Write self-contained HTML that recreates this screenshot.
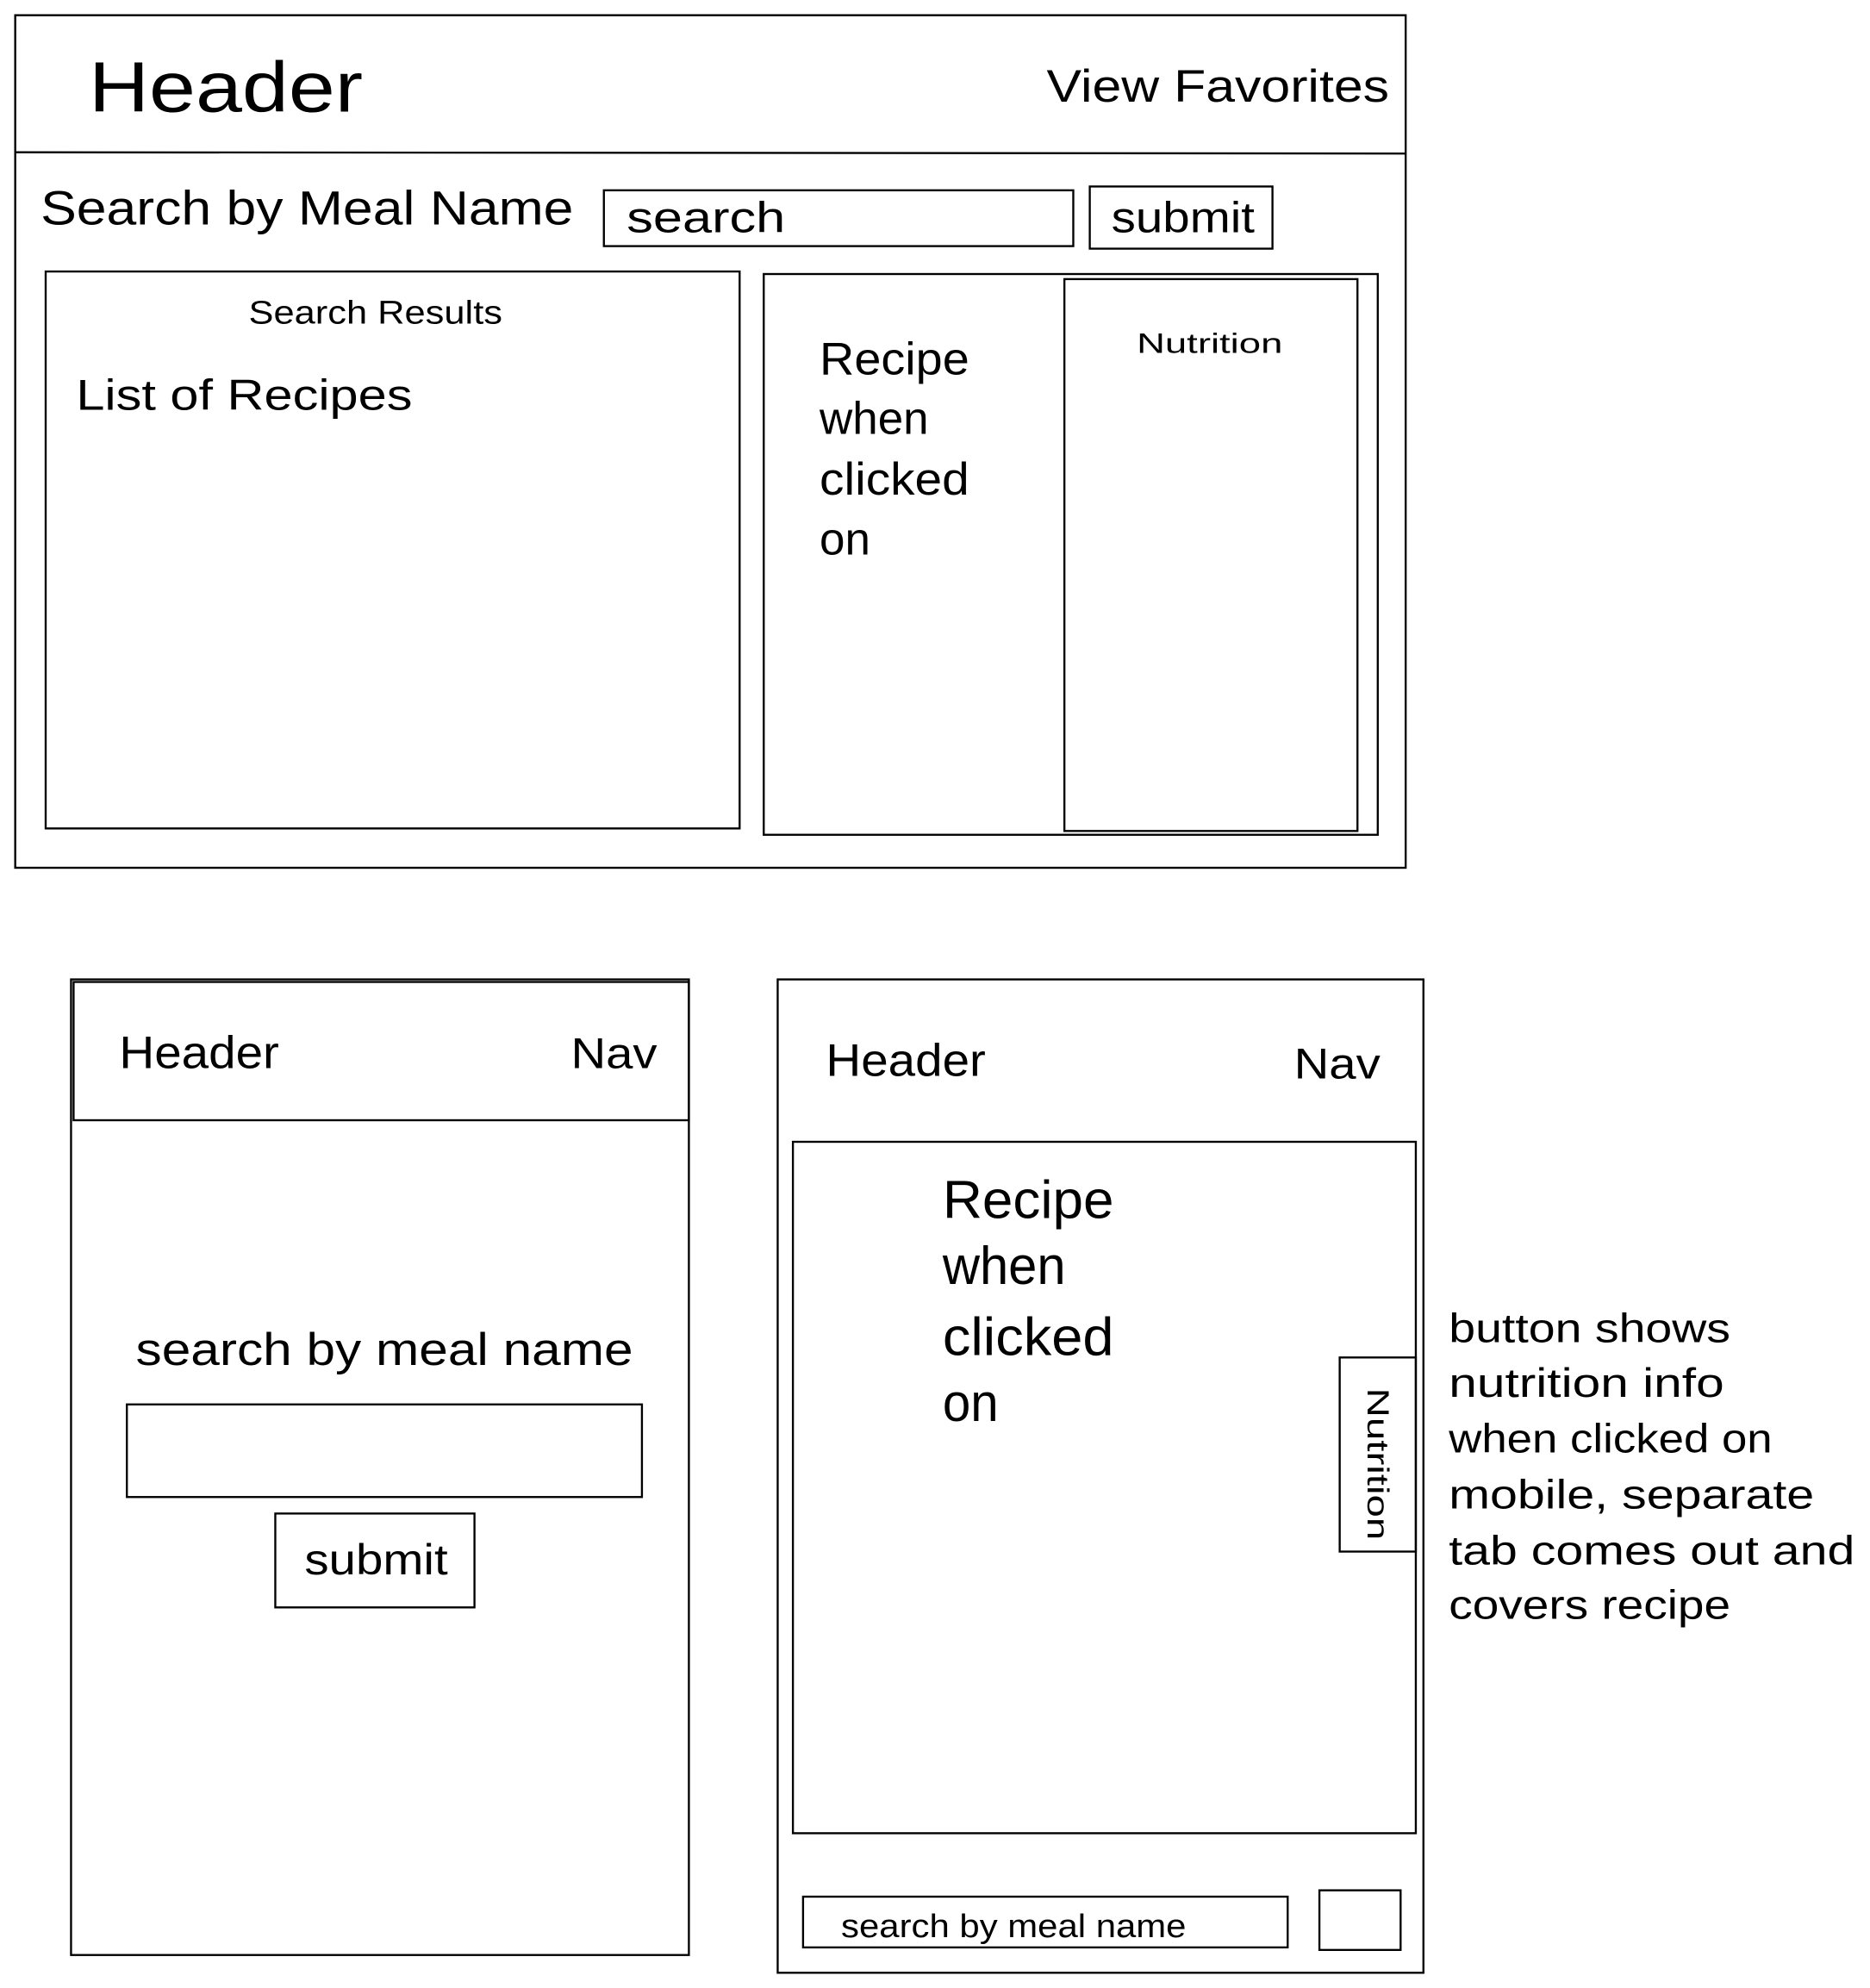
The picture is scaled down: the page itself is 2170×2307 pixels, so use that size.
<!DOCTYPE html>
<html><head><meta charset="utf-8"><style>
html,body{margin:0;padding:0;background:#fff;}
svg{display:block;}
text{font-family:"Liberation Sans",sans-serif;fill:#000;}
</style></head><body>
<svg width="2170" height="2307" viewBox="0 0 1474 1567" preserveAspectRatio="none" xmlns="http://www.w3.org/2000/svg">
<rect width="1474" height="1567" fill="#fff"/>
<g fill="none" stroke="#000" stroke-width="1.6">
<rect x="12" y="12" width="1096" height="672"/>
<line x1="12" y1="120" x2="1108" y2="121"/>
<rect x="476" y="150" width="370" height="44"/>
<rect x="859" y="147" width="144" height="49"/>
<rect x="36" y="214" width="547" height="439"/>
<rect x="602" y="216" width="484" height="442"/>
<rect x="839" y="220" width="231" height="435"/>
<rect x="56" y="772" width="487" height="769"/>
<rect x="58" y="774" width="485" height="109"/>
<rect x="100" y="1107" width="406" height="73"/>
<rect x="217" y="1193" width="157" height="74"/>
<rect x="613" y="772" width="509" height="783"/>
<rect x="625" y="900" width="491" height="545"/>
<rect x="1056" y="1070" width="60" height="153"/>
<rect x="633" y="1495" width="382" height="40"/>
<rect x="1040" y="1490" width="64" height="47"/>
</g>
<text x="70" y="88" font-size="56" textLength="216" lengthAdjust="spacingAndGlyphs">Header</text>
<text x="825" y="80" font-size="36" textLength="270" lengthAdjust="spacingAndGlyphs">View Favorites</text>
<text x="32" y="177" font-size="38" textLength="420" lengthAdjust="spacingAndGlyphs">Search by Meal Name</text>
<text x="494" y="183" font-size="34" textLength="125" lengthAdjust="spacingAndGlyphs">search</text>
<text x="876" y="183" font-size="34" textLength="113" lengthAdjust="spacingAndGlyphs">submit</text>
<text x="196" y="255" font-size="26" textLength="200" lengthAdjust="spacingAndGlyphs">Search Results</text>
<text x="60" y="323" font-size="34" textLength="265" lengthAdjust="spacingAndGlyphs">List of Recipes</text>
<text x="896" y="278" font-size="22" textLength="115" lengthAdjust="spacingAndGlyphs">Nutrition</text>
<text x="646" y="295" font-size="36" textLength="118" lengthAdjust="spacingAndGlyphs">Recipe</text>
<text x="646" y="342" font-size="36" textLength="86" lengthAdjust="spacingAndGlyphs">when</text>
<text x="646" y="390" font-size="36" textLength="118" lengthAdjust="spacingAndGlyphs">clicked</text>
<text x="646" y="437" font-size="36" textLength="40" lengthAdjust="spacingAndGlyphs">on</text>
<text x="94" y="842" font-size="36" textLength="126" lengthAdjust="spacingAndGlyphs">Header</text>
<text x="450" y="842" font-size="34" textLength="68" lengthAdjust="spacingAndGlyphs">Nav</text>
<text x="107" y="1076" font-size="36" textLength="392" lengthAdjust="spacingAndGlyphs">search by meal name</text>
<text x="240" y="1241" font-size="34" textLength="113" lengthAdjust="spacingAndGlyphs">submit</text>
<text x="651" y="848" font-size="36" textLength="126" lengthAdjust="spacingAndGlyphs">Header</text>
<text x="1020" y="850" font-size="34" textLength="68" lengthAdjust="spacingAndGlyphs">Nav</text>
<text x="743" y="960" font-size="42" textLength="135" lengthAdjust="spacingAndGlyphs">Recipe</text>
<text x="743" y="1012" font-size="42" textLength="97" lengthAdjust="spacingAndGlyphs">when</text>
<text x="743" y="1068" font-size="42" textLength="135" lengthAdjust="spacingAndGlyphs">clicked</text>
<text x="743" y="1120" font-size="42" textLength="44" lengthAdjust="spacingAndGlyphs">on</text>
<text transform="translate(1078,1094) rotate(90)" font-size="24" textLength="120" lengthAdjust="spacingAndGlyphs">Nutrition</text>
<text x="663" y="1527" font-size="26" textLength="272" lengthAdjust="spacingAndGlyphs">search by meal name</text>
<g font-size="32">
<text x="1142" y="1058" textLength="222" lengthAdjust="spacingAndGlyphs">button shows</text>
<text x="1142" y="1101" textLength="217" lengthAdjust="spacingAndGlyphs">nutrition info</text>
<text x="1142" y="1145" textLength="255" lengthAdjust="spacingAndGlyphs">when clicked on</text>
<text x="1142" y="1189" textLength="288" lengthAdjust="spacingAndGlyphs">mobile, separate</text>
<text x="1142" y="1233" textLength="320" lengthAdjust="spacingAndGlyphs">tab comes out and</text>
<text x="1142" y="1276" textLength="222" lengthAdjust="spacingAndGlyphs">covers recipe</text>
</g>
</svg>
</body></html>
